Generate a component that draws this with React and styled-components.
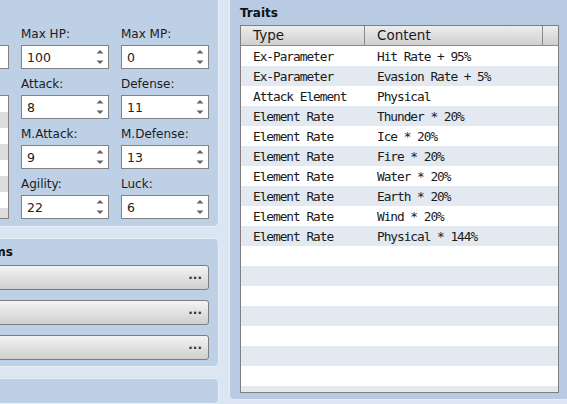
import React from "react";
import styled, { createGlobalStyle } from "styled-components";

const GlobalStyle = createGlobalStyle`
  html, body { margin: 0; padding: 0; }
  body {
    background: #dbe6f2;
    font-family: "DejaVu Sans", "Liberation Sans", sans-serif;
    color: #1c1c1c;
    overflow: hidden;
  }
`;

const Screen = styled.div`
  display: flex;
  width: 567px;
  height: 404px;
  overflow: hidden;
  background: #dbe6f2;
`;

const LeftColumn = styled.div`
  flex: 0 0 291px;
  margin-left: -72px;
  margin-top: -6px;
  display: flex;
  flex-direction: column;
  gap: 11px;
`;

const Panel = styled.section`
  box-sizing: border-box;
  background: #bdd0e6;
  border: 1px solid #e6eef7;
  border-radius: 5px;
  padding: ${(p) => p.$pad || "6px 9px"};
  ${(p) => (p.$height ? `height: ${p.$height}px;` : "")}
  display: flex;
  flex-direction: column;
`;

const RightPanel = styled(Panel)`
  flex: 1;
  margin: -6px -6px 0 10px;
  height: 406px;
  background: #b8cbe2;
`;

const PanelTitle = styled.div`
  font-weight: bold;
  font-size: 12px;
  line-height: 15px;
  white-space: nowrap;
  color: #111;
`;

const ParamArea = styled.div`
  display: flex;
  gap: 12px;
`;

const Stub = styled.div`
  flex: 0 0 71px;
  display: flex;
  flex-direction: column;
  padding-top: 18px;
  gap: 26px;
`;

const NameBox = styled.div`
  box-sizing: border-box;
  height: 24px;
  background: #fff;
  border: 1px solid #828282;
`;

const ImageBox = styled.div`
  flex: 1;
  box-sizing: border-box;
  border: 1px solid #828282;
  background-color: #fff;
  background-image: repeating-conic-gradient(#dcdcdc 0 25%, #ffffff 0 50%);
  background-size: 32px 32px;
  background-position: right -20px top 0;
`;

const ParamGrid = styled.div`
  display: grid;
  grid-template-columns: 88px 88px;
  column-gap: 12px;
  row-gap: 8px;
`;

const Field = styled.div`
  display: flex;
  flex-direction: column;
  gap: 3px;
`;

const Label = styled.label`
  font-size: 12px;
  line-height: 15px;
  color: #1c1c1c;
  white-space: nowrap;
`;

const SpinBox = styled.div`
  box-sizing: border-box;
  height: 24px;
  background: #fff;
  border: 1px solid #828282;
  display: flex;
  align-items: center;
  padding: 0 4px 0 5px;
  font-size: 12.5px;
  color: #222;
`;

const SpinValue = styled.span`
  flex: 1;
`;

const Arrows = () => (
  <svg width="8" height="16" viewBox="0 0 8 16">
    <polygon points="0.5,4.5 4,1 7.5,4.5" fill="#626262" />
    <polygon points="0.5,11.5 4,15 7.5,11.5" fill="#626262" />
  </svg>
);

const ButtonList = styled.div`
  display: flex;
  flex-direction: column;
  gap: 10px;
  margin-top: 5px;
`;

const PickButton = styled.button`
  box-sizing: border-box;
  height: 25px;
  width: 100%;
  margin: 0;
  border: 1px solid #7d7d7d;
  border-radius: 3px;
  background: linear-gradient(#f4f4f4, #cfcfcf);
  display: flex;
  justify-content: flex-end;
  align-items: center;
  padding: 0 6px 6px 0;
  font-family: "DejaVu Sans", sans-serif;
  font-size: 12px;
  font-weight: bold;
  color: #333;
`;

const Table = styled.div`
  flex: 1;
  margin-top: 4px;
  box-sizing: border-box;
  border: 1px solid #7e7e7e;
  background: #fff;
  overflow: hidden;
  display: flex;
  flex-direction: column;
`;

const HeaderRow = styled.div`
  display: grid;
  grid-template-columns: 124px 178px 1fr;
  flex: 0 0 20px;
  height: 20px;
  box-sizing: border-box;
  border-bottom: 1px solid #8a8a8a;
  background: linear-gradient(#ededed, #cfcfcf);
`;

const HeaderCell = styled.div`
  box-sizing: border-box;
  border-right: ${(p) => (p.$last ? "none" : "1px solid #8a8a8a")};
  padding-left: 12px;
  font-size: 13.5px;
  line-height: 19px;
  color: #1a1a1a;
  white-space: nowrap;
`;

const Row = styled.div`
  display: grid;
  grid-template-columns: 124px 178px 1fr;
  flex: 0 0 20px;
  height: 20px;
  background: ${(p) => (p.$alt ? "#e2e9f1" : "#ffffff")};
`;

const Cell = styled.div`
  box-sizing: border-box;
  height: 20px;
  padding: 2px 0 0 12px;
  font-family: "DejaVu Sans Mono", "Liberation Mono", monospace;
  font-size: 12.8px;
  letter-spacing: -1.03px;
  line-height: 18px;
  color: #1a1a1a;
  white-space: nowrap;
`;

const params = [
  ["Max HP:", "100"],
  ["Max MP:", "0"],
  ["Attack:", "8"],
  ["Defense:", "11"],
  ["M.Attack:", "9"],
  ["M.Defense:", "13"],
  ["Agility:", "22"],
  ["Luck:", "6"],
];

const traits = [
  ["Ex-Parameter", "Hit Rate + 95%"],
  ["Ex-Parameter", "Evasion Rate + 5%"],
  ["Attack Element", "Physical"],
  ["Element Rate", "Thunder * 20%"],
  ["Element Rate", "Ice * 20%"],
  ["Element Rate", "Fire * 20%"],
  ["Element Rate", "Water * 20%"],
  ["Element Rate", "Earth * 20%"],
  ["Element Rate", "Wind * 20%"],
  ["Element Rate", "Physical * 144%"],
];

const rows = [...traits, ...Array.from({ length: 9 }, () => ["", ""])];

export default function App() {
  return (
    <>
      <GlobalStyle />
      <Screen>
        <LeftColumn>
          <Panel $pad="32px 9px 7px 9px" $height={233}>
            <ParamArea>
              <Stub>
                <NameBox />
                <ImageBox />
              </Stub>
              <ParamGrid>
                {params.map(([label, value]) => (
                  <Field key={label}>
                    <Label>{label}</Label>
                    <SpinBox>
                      <SpinValue>{value}</SpinValue>
                      <Arrows />
                    </SpinBox>
                  </Field>
                ))}
              </ParamGrid>
            </ParamArea>
          </Panel>
          <Panel $pad="6px 9px 6px 9px">
            <PanelTitle>Drop Items</PanelTitle>
            <ButtonList>
              <PickButton>...</PickButton>
              <PickButton>...</PickButton>
              <PickButton>...</PickButton>
            </ButtonList>
          </Panel>
          <Panel $pad="6px 9px" $height={40} />
        </LeftColumn>
        <RightPanel $pad="11px 13px 6px 10px">
          <PanelTitle>Traits</PanelTitle>
          <Table>
            <HeaderRow>
              <HeaderCell>Type</HeaderCell>
              <HeaderCell>Content</HeaderCell>
              <HeaderCell $last />
            </HeaderRow>
            {rows.map(([type, content], i) => (
              <Row key={i} $alt={i % 2 === 1}>
                <Cell>{type}</Cell>
                <Cell>{content}</Cell>
                <Cell />
              </Row>
            ))}
          </Table>
        </RightPanel>
      </Screen>
    </>
  );
}
